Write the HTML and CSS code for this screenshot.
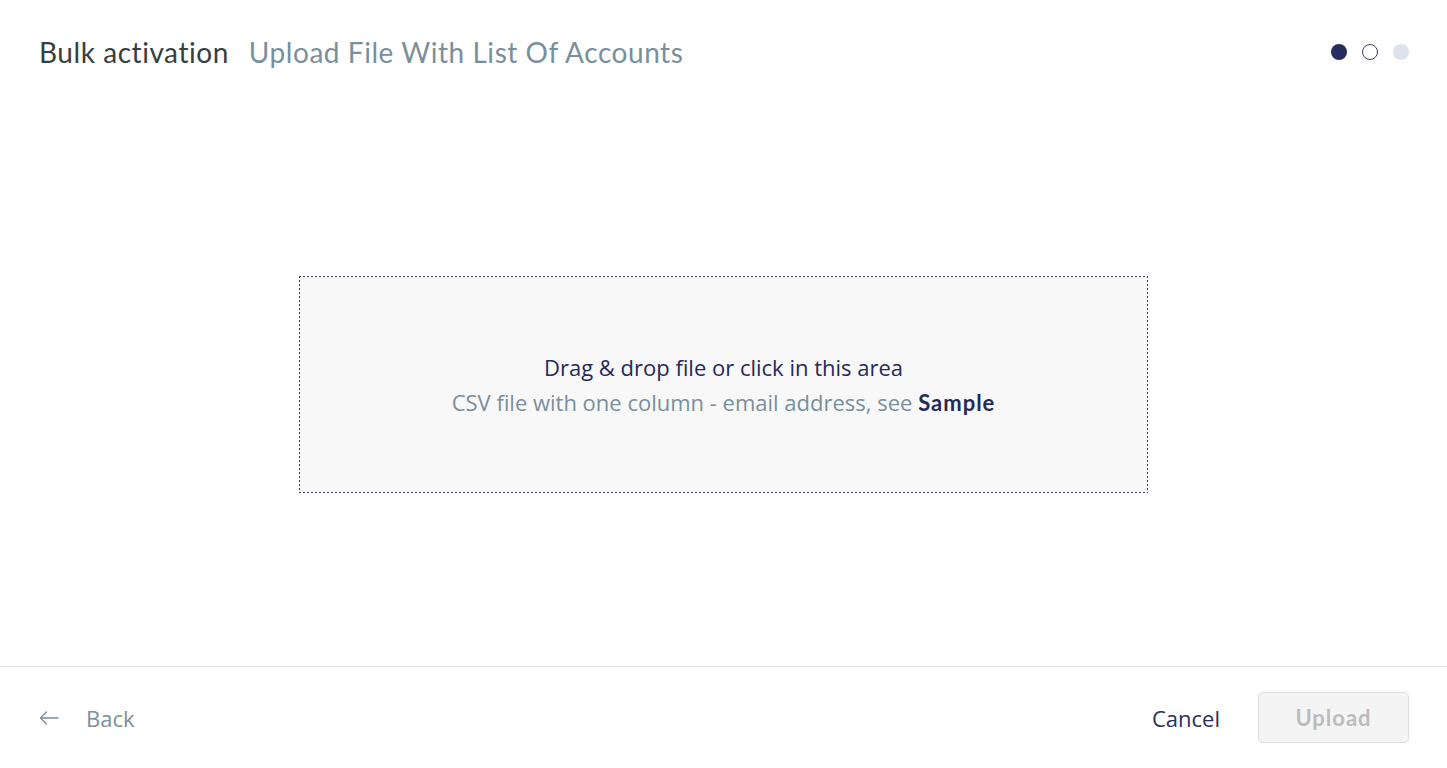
FILE: index.html
```html
<!DOCTYPE html>
<html lang="en">
<head>
  <meta charset="UTF-8" />
  <title>Bulk activation</title>
  <link rel="stylesheet" href="styles.css">
</head>
<body>
<div class="page">
  <header class="top">
    <h1 class="title">Bulk activation<span class="step-name">Upload File With List Of Accounts</span></h1>
    <div class="steps">
      <span class="dot current"></span>
      <span class="dot next"></span>
      <span class="dot todo"></span>
    </div>
  </header>

  <main class="content">
    <div class="dropzone">
      <p class="drop-main">Drag &amp; drop file or click in this area</p>
      <p class="drop-hint">CSV file with one column - email address, see <a href="#" class="sample">Sample</a></p>
    </div>
  </main>

  <footer class="actions">
    <a href="#" class="back">
      <svg width="20" height="14" viewBox="0 0 20 14" fill="none" stroke="#7b8f9c" stroke-width="1.4" stroke-linecap="round" stroke-linejoin="round">
        <path d="M19 7H1.5M7.5 1L1.5 7l6 6"/>
      </svg>
      <span>Back</span>
    </a>
    <div class="right">
      <a href="#" class="cancel">Cancel</a>
      <button class="upload" disabled>Upload</button>
    </div>
  </footer>
</div>
</body>
</html>
```

FILE: styles.css
```css
body {
  margin: 0;
  font-family: "Open Sans", sans-serif;
  background: #fff;
}

.page {
  height: 768px;
  display: flex;
  flex-direction: column;
}

.top {
  height: 103px;
  display: flex;
  align-items: flex-start;
  justify-content: space-between;
  padding: 0 38px 0 39px;
  box-sizing: border-box;
}

.title {
  margin: 33px 0 0;
  font-family: Lato, sans-serif;
  font-weight: 400;
  font-size: 28px;
  letter-spacing: 0.55px;
  line-height: 38px;
  color: #36403f;
}

.step-name {
  color: #7a8f9c;
  margin-left: 20px;
}

.steps {
  display: flex;
  gap: 15px;
  margin-top: 44px;
}

.dot {
  width: 16px;
  height: 16px;
  border-radius: 50%;
  box-sizing: border-box;
}

.dot.current {
  background: #272d5e;
}

.dot.next {
  border: 1.5px solid #3a3f66;
}

.dot.todo {
  background: #dde3ea;
}

.content {
  flex: 1;
  display: flex;
  align-items: center;
  justify-content: center;
}

/* dotted frame drawn with gradients: 2px dash, 2px gap */
.dropzone {
  width: 849px;
  height: 217px;
  box-sizing: border-box;
  background-color: #f8f8f8;
  background-image:
    repeating-linear-gradient(90deg, #3a3f5a 0 2px, transparent 2px 4px),
    repeating-linear-gradient(90deg, #3a3f5a 0 2px, transparent 2px 4px),
    repeating-linear-gradient(180deg, #3a3f5a 0 2px, transparent 2px 4px),
    repeating-linear-gradient(180deg, #3a3f5a 0 2px, transparent 2px 4px);
  background-size: 100% 1px, 100% 1px, 1px 100%, 1px 100%;
  background-position: top left, bottom left, top left, top right;
  background-repeat: no-repeat;
  display: flex;
  flex-direction: column;
  align-items: center;
  justify-content: center;
}

.drop-main {
  margin: 0;
  font-size: 22px;
  line-height: 35px;
  color: #262a58;
}

.drop-hint {
  margin: 0;
  font-size: 22px;
  line-height: 35px;
  color: #7a8f9c;
}

.sample {
  font-family: Lato, sans-serif;
  font-weight: 700;
  letter-spacing: 1px;
  color: #262a58;
  text-decoration: none;
}

.actions {
  height: 102px;
  border-top: 1px solid #e0e0e6;
  box-sizing: border-box;
  display: flex;
  align-items: center;
  justify-content: space-between;
  padding: 0 38px 0 39px;
}

.back {
  display: flex;
  align-items: center;
  gap: 27px;
  text-decoration: none;
  font-size: 22px;
  color: #7b8f9c;
}

.right {
  display: flex;
  align-items: center;
  gap: 38px;
}

.cancel {
  font-size: 22px;
  color: #27305a;
  text-decoration: none;
}

.upload {
  width: 151px;
  height: 51px;
  border: 1px solid #dcdcdc;
  border-radius: 5px;
  background: #f4f4f4;
  color: #bcbcbc;
  font-family: Lato, sans-serif;
  font-weight: 700;
  font-size: 22px;
  letter-spacing: 1px;
}
```
